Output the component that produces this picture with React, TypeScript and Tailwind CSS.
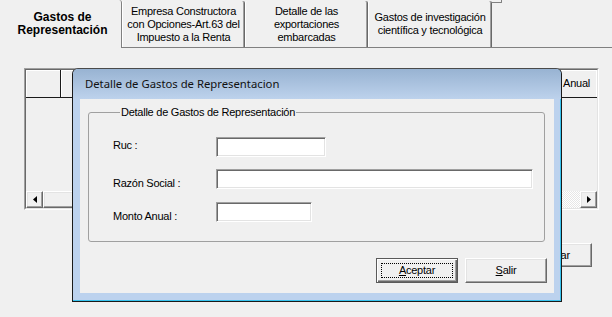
import React from "react";

const raised =
  "border border-t-white border-l-white border-r-[#696969] border-b-[#696969] shadow-[inset_-1px_-1px_0_#a0a0a0,inset_1px_1px_0_#e3e3e3] bg-[#f0f0f0]";

const sunken =
  "border border-t-[#a0a0a0] border-l-[#a0a0a0] border-r-white border-b-white shadow-[inset_1px_1px_0_#696969,inset_-1px_-1px_0_#e3e3e3] bg-white";

function Tab({
  lines,
  width,
}: {
  lines: string[];
  width: string;
}) {
  return (
    <div
      className={`${width} h-[46px] flex flex-col items-center justify-center border-l border-white border-r border-r-[#696969] shadow-[inset_-1px_0_0_#a0a0a0] rounded-t-[2px] text-[11px] leading-[13px] tracking-[-0.25px] text-black`}
    >
      {lines.map((l) => (
        <span key={l} className="whitespace-nowrap">
          {l}
        </span>
      ))}
    </div>
  );
}

function ArrowButton({ dir }: { dir: "left" | "right" }) {
  return (
    <div className={`w-[17px] h-full flex items-center justify-center ${raised}`}>
      <svg width="4" height="7" viewBox="0 0 4 7">
        {dir === "left" ? (
          <path d="M4 0 L0 3.5 L4 7 Z" fill="#000" />
        ) : (
          <path d="M0 0 L4 3.5 L0 7 Z" fill="#000" />
        )}
      </svg>
    </div>
  );
}

function Field({
  label,
  width,
  labelPad,
}: {
  label: string;
  width: string;
  labelPad: string;
}) {
  return (
    <div className="flex items-start">
      <span className={`w-[103px] ${labelPad} leading-[13px]`}>{label}</span>
      <div className={`${width} h-[20px] ${sunken}`} />
    </div>
  );
}

export default function App() {
  return (
    <div className="relative w-[612px] h-[317px] overflow-hidden bg-[#f0f0f0] font-['Liberation_Sans',Arial,sans-serif] text-[11px] text-black">
      {/* tab strip */}
      <div className="flex h-[48px] items-end">
        <div className="w-[122px] h-[48px] flex flex-col items-center justify-center border-r border-[#808080] rounded-tr-[3px] pl-[4px] text-[12px] leading-[13px] font-bold">
          <span>Gastos de</span>
          <span>Representación</span>
        </div>
        <div className="flex items-end border-b border-[#808080]">
          <Tab
            width="w-[123px]"
            lines={["Empresa Constructora", "con Opciones-Art.63 del", "Impuesto a la Renta"]}
          />
          <Tab width="w-[123px]" lines={["Detalle de las", "exportaciones", "embarcadas"]} />
          <Tab
            width="w-[124px]"
            lines={["Gastos de investigación", "científica y tecnológica"]}
          />
        </div>
        <div className="flex-1 h-[48px] flex flex-col border-b border-[#808080]">
          <div className="w-[10px] h-[3px] border-b border-r border-[#808080] rounded-br-[1px]" />
        </div>
      </div>

      {/* grid */}
      <div className="ml-[24px] mt-[20px] w-[575px] h-[142px] border border-t-[#a0a0a0] border-l-[#a0a0a0] border-r-white border-b-white">
        <div className="h-full flex flex-col border border-t-[#696969] border-l-[#696969] border-r-[#e3e3e3] border-b-[#e3e3e3]">
          <div className="h-[28px] flex border-b border-[#1a1a1a]">
            <div className="w-[35px] border-r border-[#1a1a1a] shadow-[inset_1px_1px_0_white]" />
            <div className="w-[120px] border-r border-[#1a1a1a] shadow-[inset_1px_1px_0_white]" />
            <div className="flex-1 flex items-center justify-end pr-[7px] shadow-[inset_1px_1px_0_white,inset_-1px_0_0_white]">
              <span className="text-[11px] tracking-[-0.25px]">Monto Anual</span>
            </div>
          </div>
          <div className="flex-1" />
          <div className="h-[17px] flex">
            <ArrowButton dir="left" />
            <div className={`w-[260px] h-full ${raised}`} />
            <div className="flex-1 h-full bg-[repeating-conic-gradient(#ffffff_0%_25%,#e6e6e6_0%_50%)] bg-[length:2px_2px]" />
            <ArrowButton dir="right" />
          </div>
        </div>
      </div>

      {/* button behind dialog */}
      <div className="flex justify-end pr-[20px] mt-[33px]">
        <button className={`w-[75px] h-[24px] pr-[7px] ${raised} text-[11px] tracking-[-0.25px]`}>
          Eliminar
        </button>
      </div>

      {/* dialog */}
      <div className="absolute left-[72px] top-[68px] w-[490px] h-[234px] flex flex-col rounded-t-[6px] border border-[#1a1a1a] border-t-[#4a4a4a] bg-[#bcd2ee] shadow-[inset_-1px_-1px_0_#38c3ee]">
        <div className="h-[30px] flex items-center pl-[12px] pt-[1px] rounded-t-[5px] bg-gradient-to-b from-[#98b3d2] to-[#bdd2ec] font-['Noto_Sans',sans-serif] text-[11.3px] text-[#111]">
          Detalle de Gastos de Representacion
        </div>
        <div className="flex-1 mx-[7px] mb-[8px] bg-[#f0f0f0] flex flex-col tracking-[-0.25px]">
          <fieldset className="ml-[8px] mr-[9px] mt-[7px] h-[136px] border border-[#a0a0a0] rounded-[3px] pl-[24px] pt-[18px]">
            <legend className="ml-[7px] px-[1px] leading-[13px]">
              Detalle de Gastos de Representación
            </legend>
            <div className="flex flex-col gap-[12px]">
              <Field label="Ruc :" width="w-[110px]" labelPad="pt-[2px]" />
              <Field label="Razón Social :" width="w-[317px]" labelPad="pt-[8px]" />
              <Field label="Monto Anual :" width="w-[96px]" labelPad="pt-[8px]" />
            </div>
          </fieldset>
          <div className="flex justify-end gap-[7px] pr-[7px] mt-[16px]">
            <button className="relative w-[82px] h-[25px] bg-[#f0f0f0] border border-[#5a5a5a] shadow-[inset_1px_1px_0_white,inset_-1px_-1px_0_#696969,inset_-2px_-2px_0_#a0a0a0]">
              <span className="absolute inset-[4px] border border-dotted border-black" />
              <span>
                <span className="underline underline-offset-[1px]">A</span>ceptar
              </span>
            </button>
            <button className={`w-[82px] h-[25px] ${raised}`}>
              <span className="underline underline-offset-[1px]">S</span>alir
            </button>
          </div>
        </div>
      </div>
    </div>
  );
}
